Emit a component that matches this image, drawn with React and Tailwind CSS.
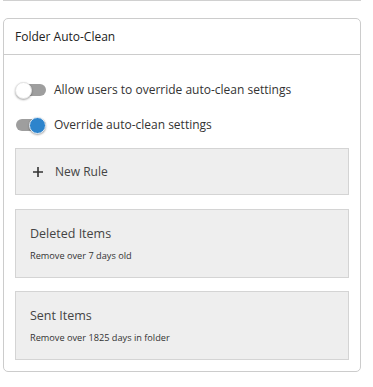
import React from "react";

const Toggle = ({ on }) => (
  <div className="relative w-[31px] h-[17px] flex items-center shrink-0">
    <div className="w-[30px] h-[12px] rounded-full bg-[#9e9e9e] ml-[1px]" />
    <div
      className={
        "absolute top-0 w-[17px] h-[17px] rounded-full shadow-[0_1px_2px_rgba(0,0,0,0.35)] " +
        (on ? "left-[14px] bg-[#2d84cc] border border-[#e8f0f8]" : "left-0 bg-white border border-[#e4e4e4]")
      }
    />
  </div>
);

const RuleCard = ({ title, sub }) => (
  <div className="border border-[#d4d4d4] bg-[#eeeeee] h-[69px] px-[14px] pt-[14px]">
    <div className="text-[12.5px] text-[#444] leading-[20px]">{title}</div>
    <div className="text-[9.2px] text-[#333] leading-[14px] mt-[5px]">{sub}</div>
  </div>
);

export default function App() {
  return (
    <div className="w-[373px] h-[387px] bg-white font-['Open_Sans',sans-serif] px-[3px] relative">
      <div className="h-[1px] w-[358px] bg-[#d0d0d0]" />
      <div className="mt-[17px] w-[358px] border border-[#cccccc] rounded-[5px]">
        <div className="h-[36px] flex items-center px-[11px] border-b border-[#cccccc] text-[12px] text-[#222]">
          Folder Auto-Clean
        </div>
        <div className="px-[11px] pt-[26px] pb-[11px] flex flex-col">
          <div className="flex items-center gap-[8px] h-[18px] text-[12px] text-[#333]">
            <Toggle on={false} />
            <span>Allow users to override auto-clean settings</span>
          </div>
          <div className="flex items-center gap-[8px] h-[18px] mt-[17px] text-[12px] text-[#333]">
            <Toggle on />
            <span>Override auto-clean settings</span>
          </div>
          <div className="mt-[14px] h-[47px] border border-[#d4d4d4] bg-[#eeeeee] flex items-center pl-[16px] text-[12px] text-[#444]">
            <svg width="12" height="12" viewBox="0 0 12 12" className="mr-[11px]">
              <path d="M6 1v10M1 6h10" stroke="#333" strokeWidth="1.6" />
            </svg>
            New Rule
          </div>
          <div className="mt-[14px]">
            <RuleCard title="Deleted Items" sub="Remove over 7 days old" />
          </div>
          <div className="mt-[13px]">
            <RuleCard title="Sent Items" sub="Remove over 1825 days in folder" />
          </div>
        </div>
      </div>
    </div>
  );
}
